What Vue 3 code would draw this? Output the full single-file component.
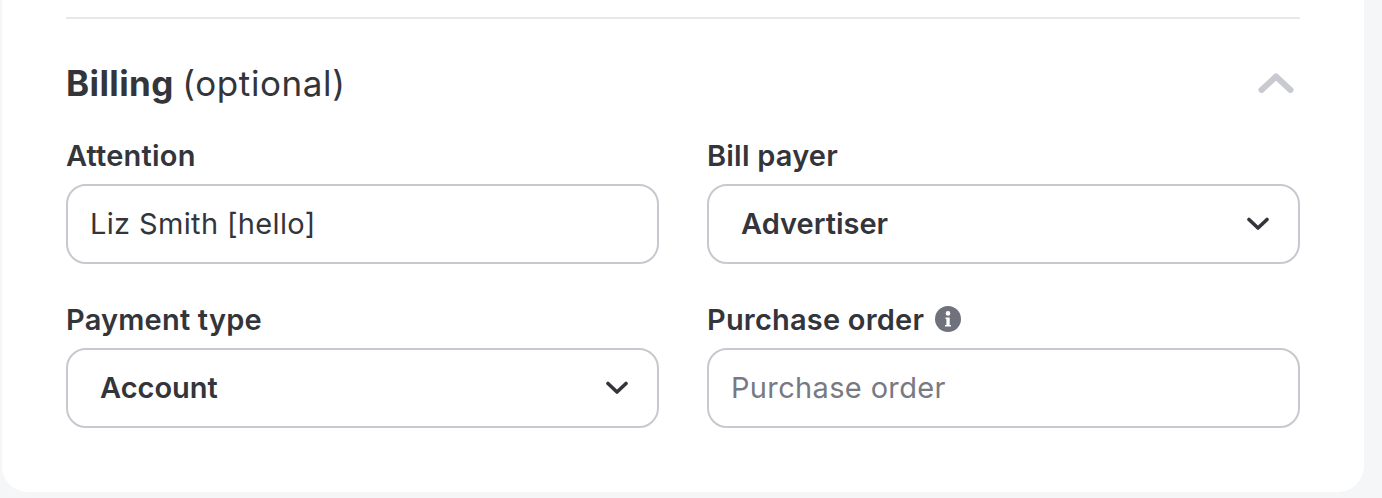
<template>
  <main class="page">
    <section class="card">
      <hr class="divider" />

      <header class="section-head">
        <h2><strong>Billing</strong> (optional)</h2>
        <button class="collapse" type="button" aria-label="Collapse billing">
          <svg width="36" height="22" viewBox="0 0 36 22" fill="none">
            <path d="M3.500 18 18 4.500 32.500 18" stroke="#c9cad0" stroke-width="6" stroke-linecap="round" stroke-linejoin="round" />
          </svg>
        </button>
      </header>

      <div class="form-grid">
        <div class="field">
          <label for="attention">Attention</label>
          <input id="attention" type="text" v-model="attention" />
        </div>

        <div class="field">
          <label>Bill payer</label>
          <div class="select">
            <span>{{ billPayer }}</span>
            <svg width="22" height="14" viewBox="0 0 22 14" fill="none">
              <path d="M2 2.5 11 11l9-8.500" stroke="#33353a" stroke-width="3.6" stroke-linecap="round" stroke-linejoin="round" />
            </svg>
          </div>
        </div>

        <div class="field">
          <label>Payment type</label>
          <div class="select">
            <span>{{ paymentType }}</span>
            <svg width="22" height="14" viewBox="0 0 22 14" fill="none">
              <path d="M2 2.5 11 11l9-8.500" stroke="#33353a" stroke-width="3.6" stroke-linecap="round" stroke-linejoin="round" />
            </svg>
          </div>
        </div>

        <div class="field">
          <label for="purchase-order">
            Purchase order
            <svg class="info" width="26" height="26" viewBox="0 0 26 26">
              <circle cx="13" cy="13" r="13" fill="#6f727c" />
              <circle cx="13" cy="7.400" r="2.300" fill="#fff" />
              <path d="M10.500 11.500h4.200v7.500h1.300v1.500h-6v-1.500h1.400v-6h-0.900z" fill="#fff" />
            </svg>
          </label>
          <input id="purchase-order" type="text" v-model="purchaseOrder" placeholder="Purchase order" />
        </div>
      </div>
    </section>
  </main>
</template>

<script setup>
import { ref } from 'vue'

const attention = ref('Liz Smith [hello]')
const purchaseOrder = ref('')
const billPayer = ref('Advertiser')
const paymentType = ref('Account')
</script>

<style>
html,
body {
  margin: 0;
  background: #f5f6f8;
}
</style>

<style scoped>
.page {
  height: 498px;
  padding: 0 18px 6px 2px;
  box-sizing: border-box;
  overflow: hidden;
}

.card {
  height: 492px;
  box-sizing: border-box;
  padding: 17px 64px 0;
  background: #ffffff;
  border-radius: 0 0 26px 26px;
  font-family: Inter, 'Liberation Sans', sans-serif;
  color: #33353a;
}

.divider {
  height: 2px;
  margin: 0;
  border: 0;
  background: #e8e8ea;
}

.section-head {
  display: flex;
  justify-content: space-between;
  align-items: center;
  height: 44px;
  margin-top: 42px;
}

.section-head h2 {
  margin: 0;
  font-size: 35px;
  font-weight: 400;
  letter-spacing: 0.6px;
  line-height: 44px;
}

.section-head strong {
  margin-right: -2px;
  font-weight: 700;
  letter-spacing: 0.4px;
}

.collapse {
  display: flex;
  padding: 0;
  margin-right: 6px;
  border: 0;
  background: none;
}

.form-grid {
  display: grid;
  grid-template-columns: 593px 593px;
  column-gap: 48px;
  row-gap: 39px;
  margin-top: 34px;
}

.field {
  display: grid;
  gap: 13px;
}

.field label {
  display: flex;
  align-items: center;
  gap: 11px;
  height: 32px;
  font-size: 29px;
  font-weight: 600;
  letter-spacing: 0.2px;
}

.field input,
.select {
  width: 100%;
  height: 80px;
  box-sizing: border-box;
  border: 2px solid #c8c8cf;
  border-radius: 20px;
  background: #ffffff;
  font-family: inherit;
  font-size: 29px;
  color: #33353a;
}

.field input {
  padding: 0 22px 2px;
  letter-spacing: 0.35px;
  outline: none;
}

.field input::placeholder {
  color: #777a83;
  opacity: 1;
}

.select {
  display: flex;
  justify-content: space-between;
  align-items: center;
  padding: 0 29px 2px 32px;
  font-weight: 600;
}

.select svg {
  margin-top: 2px;
}
</style>
